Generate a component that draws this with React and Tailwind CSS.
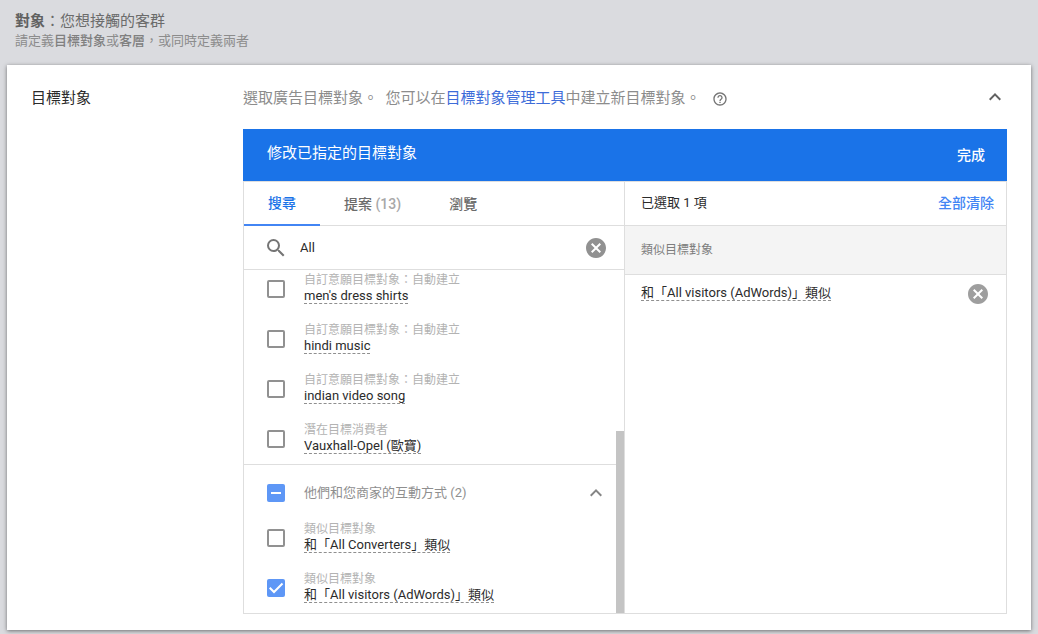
import { useEffect, useRef, useState } from "react";
import { MdCancel, MdExpandLess, MdHelpOutline, MdSearch } from "react-icons/md";

const interests = [
  { id: "shirts", type: "自訂意願目標對象：自動建立", name: "men's dress shirts" },
  { id: "hindi", type: "自訂意願目標對象：自動建立", name: "hindi music" },
  { id: "song", type: "自訂意願目標對象：自動建立", name: "indian video song" },
  { id: "opel", type: "潛在目標消費者", name: "Vauxhall-Opel (歐寶)" },
];

const interactions = [
  { id: "converters", type: "類似目標對象", name: "和「All Converters」類似" },
  { id: "visitors", type: "類似目標對象", name: "和「All visitors (AdWords)」類似" },
];

function Checkbox({ id, checked, indeterminate = false, onChange }) {
  const ref = useRef(null);
  useEffect(() => {
    if (ref.current) ref.current.indeterminate = indeterminate;
  }, [indeterminate]);
  const filled = checked || indeterminate;
  return (
    <span className="grid size-[18px] shrink-0 place-items-center">
      <input
        ref={ref}
        id={id}
        type="checkbox"
        checked={checked}
        onChange={onChange}
        className={
          filled
            ? "col-start-1 row-start-1 size-[18px] cursor-pointer appearance-none rounded-xs bg-[#5e97f6]"
            : "col-start-1 row-start-1 size-[18px] cursor-pointer appearance-none rounded-xs border-2 border-[#919191]"
        }
      />
      {filled && (
        <svg viewBox="0 0 18 18" className="pointer-events-none col-start-1 row-start-1 size-[18px]" fill="none" stroke="#fff" strokeWidth="2">
          <path d={indeterminate ? "M4 9h10" : "M2.7 8.8L7 13L15.5 4.5"} />
        </svg>
      )}
    </span>
  );
}

function AudienceRow({ item, checked, onToggle }) {
  return (
    <li className="flex h-[50px] items-center gap-[19px] pl-[23px]">
      <Checkbox id={item.id} checked={checked} onChange={onToggle} />
      <label htmlFor={item.id} className="flex cursor-pointer flex-col items-start pb-0.5">
        <span className="text-xs/4 text-[#b3b3b3]">{item.type}</span>
        <span className="border-b border-dashed border-[#8f8f8f] text-[13px]/[15px] text-[#2b2b2b]">{item.name}</span>
      </label>
    </li>
  );
}

export default function App() {
  const [query, setQuery] = useState("All");
  const [selected, setSelected] = useState(["visitors"]);
  const all = [...interests, ...interactions];
  const toggle = (id) =>
    setSelected((s) => (s.includes(id) ? s.filter((x) => x !== id) : [...s, id]));
  const groupCount = interactions.filter((i) => selected.includes(i.id)).length;

  return (
    <div lang="zh-Hant" className="min-h-screen bg-[#dadbdf] pb-1 font-['Roboto','Noto_Sans_CJK_TC',sans-serif] text-[#2b2b2b]">
      <header className="px-[15px] pt-[11px] pb-[15px]">
        <h1 className="text-[15px]/5 text-[#6b6b6b]"><b className="text-[#616161]">對象</b>：您想接觸的客群</h1>
        <p className="text-[13px]/[19px] text-[#8c8c8c]">
          請定義<b className="font-medium text-[#808080]">目標對象</b>或<b className="font-medium text-[#808080]">客層</b>，或同時定義兩者
        </p>
      </header>

      <main className="mx-[7px] flex bg-white px-6 pt-5 pb-4 shadow-[0_1px_4px_rgba(0,0,0,0.5)]">
        <h2 className="w-[212px] shrink-0 text-[15px]/[26px]">目標對象</h2>

        <div className="min-w-0 flex-1">
          <div className="flex items-center justify-between">
            <div className="flex items-center gap-3 text-[15px]/[26px] text-[#8c8c8c]">
              <p>
                選取廣告目標對象。&nbsp; 您可以在<a href="#manager" className="text-[#3d6cd9]">目標對象管理工具</a>中建立新目標對象。
              </p>
              <button type="button" aria-label="說明" className="pt-0.5 text-[#757575]">
                <MdHelpOutline size={16} />
              </button>
            </div>
            <button type="button" aria-label="收合" className="pb-0.5 text-[#616161]">
              <MdExpandLess size={24} />
            </button>
          </div>

          <section className="mt-[18px]">
            <div className="flex h-[52px] items-center justify-between bg-[#1a73e8] pr-[22px] pl-6 text-white">
              <h3 className="pb-1 text-[15px]/5">修改已指定的目標對象</h3>
              <button type="button" className="text-sm/5 font-medium">完成</button>
            </div>

            <div className="grid grid-cols-2 border border-[#dedede]">
              <div className="min-w-0 border-r border-[#dedede]">
                <div role="tablist" className="flex h-11 border-b border-[#dedede] text-sm font-medium text-[#6b6b6b]">
                  <button role="tab" aria-selected="true" type="button" className="-mb-px border-b-2 border-[#4285f4] px-6 text-[#1a73e8]">搜尋</button>
                  <button role="tab" aria-selected="false" type="button" className="px-6">
                    提案 <span className="text-[#a8a8a8]">(13)</span>
                  </button>
                  <button role="tab" aria-selected="false" type="button" className="px-6">瀏覽</button>
                </div>

                <div className="flex h-11 items-center border-b border-[#dedede] pr-4 pl-5">
                  <MdSearch size={24} className="shrink-0 text-[#757575]" />
                  <input
                    type="text"
                    aria-label="搜尋目標對象"
                    value={query}
                    onChange={(e) => setQuery(e.target.value)}
                    className="ml-3 min-w-0 flex-1 text-[13px] outline-none"
                  />
                  <button type="button" aria-label="清除搜尋" onClick={() => setQuery("")} className="text-[#919191]">
                    <MdCancel size={24} />
                  </button>
                </div>

                <div className="relative">
                  <div className="flex h-[343px] flex-col-reverse overflow-y-auto [scrollbar-width:none]">
                    <div>
                      <ul>
                        {interests.map((i) => (
                          <AudienceRow key={i.id} item={i} checked={selected.includes(i.id)} onToggle={() => toggle(i.id)} />
                        ))}
                      </ul>
                      <div className="flex h-[49px] items-center gap-[19px] border-t border-[#dedede] pt-2 pr-4 pl-[23px]">
                        <Checkbox
                          id="group"
                          checked={groupCount === interactions.length}
                          indeterminate={groupCount > 0 && groupCount < interactions.length}
                          onChange={() => setSelected(groupCount ? [] : interactions.map((i) => i.id))}
                        />
                        <label htmlFor="group" className="flex-1 text-[13px] text-[#8f8f8f]">他們和您商家的互動方式 (2)</label>
                        <button type="button" aria-label="收合群組" className="text-[#858585]">
                          <MdExpandLess size={24} />
                        </button>
                      </div>
                      <ul>
                        {interactions.map((i) => (
                          <AudienceRow key={i.id} item={i} checked={selected.includes(i.id)} onToggle={() => toggle(i.id)} />
                        ))}
                      </ul>
                    </div>
                  </div>
                  <div className="absolute right-0 bottom-0 h-[182px] w-2 bg-[#c4c4c4]" />
                </div>
              </div>

              <div className="min-w-0">
                <div className="flex h-11 items-center justify-between border-b border-[#dedede] pr-3 pb-0.5 pl-4">
                  <span className="text-[13px]">已選取 {selected.length} 項</span>
                  <button type="button" onClick={() => setSelected([])} className="text-sm font-medium text-[#4285f4]">全部清除</button>
                </div>
                <h4 className="flex h-[49px] items-center border-b border-[#dedede] bg-[#f4f4f4] px-4 text-xs text-[#7d7d7d]">類似目標對象</h4>
                <ul>
                  {all.filter((i) => selected.includes(i.id)).map((i) => (
                    <li key={i.id} className="flex items-start justify-between px-4 pt-[7px]">
                      <span className="mt-[3px] border-b border-dashed border-[#8f8f8f] text-[13px]/[15px]">{i.name}</span>
                      <button type="button" aria-label="移除" onClick={() => toggle(i.id)} className="text-[#9e9e9e]">
                        <MdCancel size={24} />
                      </button>
                    </li>
                  ))}
                </ul>
              </div>
            </div>
          </section>
        </div>
      </main>
    </div>
  );
}
